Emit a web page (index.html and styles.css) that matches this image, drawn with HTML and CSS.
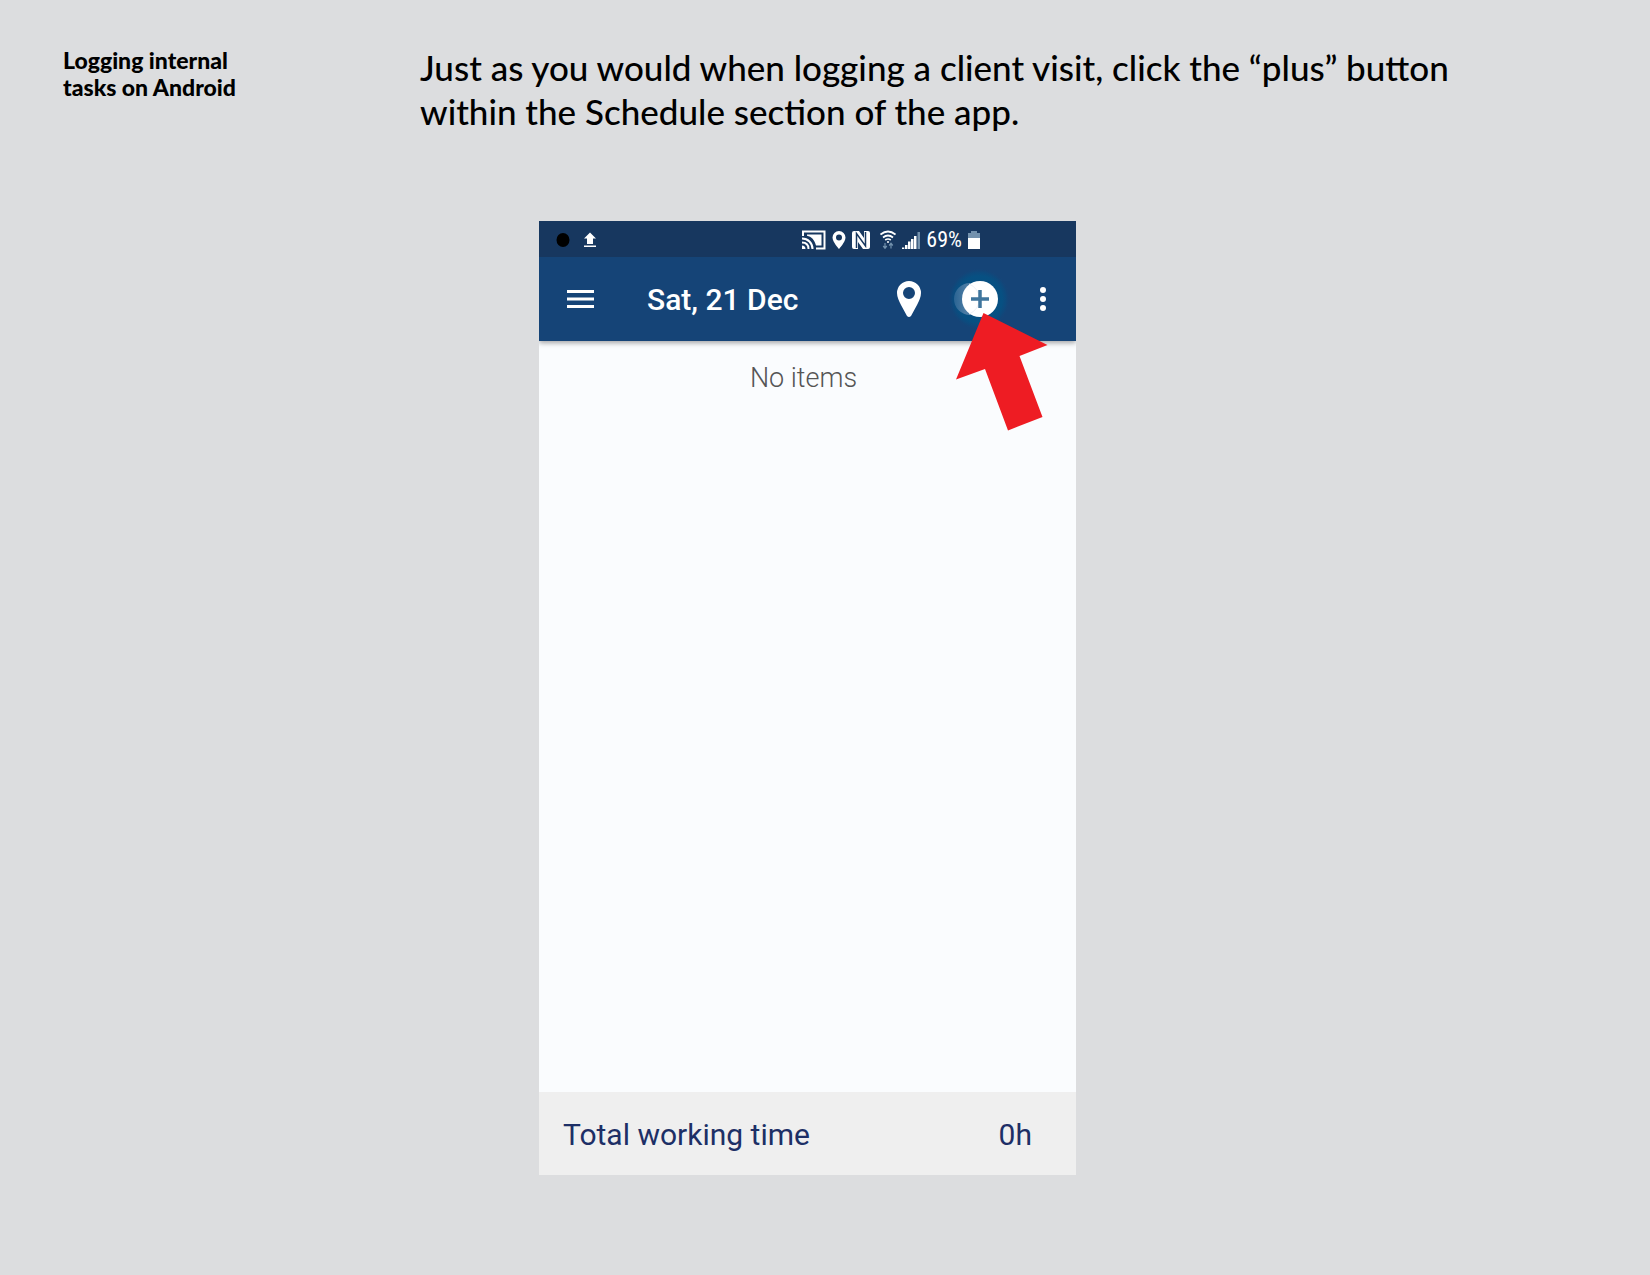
FILE: index.html
```
<!DOCTYPE html>
<html lang="en">
<head>
<meta charset="utf-8">
<meta name="viewport" content="width=device-width, initial-scale=1">
<title>Logging internal tasks on Android</title>
<link rel="stylesheet" href="styles.css">
</head>
<body>
<header class="intro">
  <h1 class="topic">Logging internal<br>tasks on Android</h1>
  <p class="lead">Just as you would when logging a client visit, click the “plus” button<br>within the Schedule section of the app.</p>
</header>
<main class="stage">
  <section class="phone" aria-label="Schedule screen">
    <div class="status">
      <div class="status-left">
        <svg width="14" height="16" viewBox="0 0 14 16"><ellipse cx="7" cy="8" rx="6.5" ry="7"/></svg>
        <svg width="12" height="16" viewBox="0 0 12 16" fill="#fff"><path d="M6 .5l6 6H9V12H3V6.500H0zM0 13.500h12v1.500H0z"/></svg>
      </div>
      <div class="status-right">
        <svg width="24" height="20" viewBox="0 0 24 20" fill="none" stroke="#fff" stroke-width="2"><path d="M1 6V1.500h21.500v17H14"/><path d="M5 4.500h14.500v11H14C12.500 10 9.500 6.500 5 5.800z" fill="#fff" stroke="none"/><path d="M0 8.500c6 0 10.500 4.500 10.500 10.500M0 12.500c4 0 6.500 2.500 6.500 6.500"/><path d="M0 15.500c2.200 0 3.500 1.300 3.500 3.500H0z" fill="#fff" stroke="none"/></svg>
        <svg width="14" height="20" viewBox="0 0 14 20" fill="#fff"><path fill-rule="evenodd" d="M7 1a6.500 6.500 0 0 0-6.500 6.500C.5 12 7 19 7 19s6.500-7 6.500-11.500A6.500 6.500 0 0 0 7 1zm0 3.500a3 3 0 1 1 0 6 3 3 0 0 1 0-6z"/></svg>
        <svg width="18" height="20" viewBox="0 0 18 20"><path d="M2 1h5l5 7V1h4q2 0 2 2v14q0 2-2 2h-5L6 12v7H2q-2 0-2-2V3q0-2 2-2z" fill="#fff"/><path d="M4.500 18V3.500L13.500 16V2" fill="none" stroke="#17375f" stroke-width="1.500"/></svg>
        <svg class="wifi" width="16" height="20" viewBox="0 0 16 20" fill="none" stroke="#fff" stroke-width="1.700"><path d="M.5 4.500q7.500-6 15 0M3 7.500q5-4 10 0M5.200 10q2.800-2 5.600 0"/><circle cx="8" cy="12" r="1" fill="#fff" stroke="none"/><path d="M5 13v5M3.200 16L5 18.200 6.800 16M11 18.500v-5M9.200 15.500l1.800-2.200 1.800 2.200" stroke="#7391ad" stroke-width="1.200"/></svg>
        <svg width="18" height="20" viewBox="0 0 18 20" fill="#fff"><path d="M0 19v-1.500h2.300V19zM3 19v-4h2.500v4zM6 19v-7.500h2.500V19zM9 19V9h2.500v10zM12 19V6h2.500v13z"/><path d="M15.500 19V2H18v17z" fill="#7391ad"/></svg>
        <span class="percent">69%</span>
        <svg width="12" height="20" viewBox="0 0 12 20"><path d="M0 3h3V1h6v2h3v5H0z" fill="#7391ad"/><path d="M0 8h12v11H0z" fill="#fff"/></svg>
      </div>
    </div>
    <div class="appbar">
      <button class="icon-btn" aria-label="Menu"><svg width="27" height="18" viewBox="0 0 27 18" fill="#fff"><path d="M0 0h27v3H0zM0 7.500h27v3H0zM0 15h27v3H0z"/></svg></button>
      <h2 class="date">Sat, 21 Dec</h2>
      <button class="icon-btn" aria-label="Location"><svg width="24" height="36" viewBox="0 0 24 36" fill="#fff"><path fill-rule="evenodd" d="M12 0A12 12 0 0 0 0 12c0 4 2 8 4 12l6 11q2 2 4 0l6-11c2-4 4-8 4-12A12 12 0 0 0 12 0zm0 6a6 6 0 1 1 0 12 6 6 0 0 1 0-12z"/></svg></button>
      <button class="icon-btn add" aria-label="Add">
        <svg width="64" height="64" viewBox="0 0 64 64">
          <defs>
            <radialGradient id="glow"><stop offset="0" stop-color="#045084"/><stop offset=".75" stop-color="#075082"/><stop offset=".87" stop-color="#0c4b7e" stop-opacity=".8"/><stop offset="1" stop-color="#154477" stop-opacity="0"/></radialGradient>
            <linearGradient id="trail"><stop offset="0" stop-color="#2a6493"/><stop offset=".35" stop-color="#4b7ba3"/></linearGradient>
          </defs>
          <circle cx="31" cy="32" r="31" fill="url(#glow)"/>
          <circle cx="22" cy="32" r="16" fill="url(#trail)"/>
          <circle cx="32" cy="32" r="18" fill="#fff"/>
          <path d="M21 17a16 16 0 0 1 0 30" fill="none" stroke="#eef1f6" stroke-width="1"/>
          <path d="M23 32h18M32 23v18" stroke="#3f759d" stroke-width="3.500"/>
        </svg>
        <svg class="arrow" width="92" height="118" viewBox="0 0 92 118"><path d="M27.500 0L91.500 32 63.500 43 86.500 104 52 117.500 29 56 0 66.500z" fill="#ee1c23"/></svg>
      </button>
      <button class="icon-btn" aria-label="More options"><svg width="6" height="24" viewBox="0 0 6 24" fill="#fff"><circle cx="3" cy="3" r="3"/><circle cx="3" cy="12" r="3"/><circle cx="3" cy="21" r="3"/></svg></button>
    </div>
    <p class="empty">No items</p>
    <div class="total"><span>Total working time</span><span>0h</span></div>
  </section>
</main>
</body>
</html>
```

FILE: styles.css
```
* { box-sizing: border-box; }
body {
  margin: 0;
  background: #dcdddf;
  color: #000;
  font-family: Roboto, sans-serif;
}
svg { display: block; flex: none; }
h1, h2, p { margin: 0; }

.intro {
  display: grid;
  grid-template-columns: 357px 1fr;
  padding: 45px 63px 0;
  font-family: Futura, Lato, sans-serif;
}
.topic { padding-top: 2px; font-size: 23px; line-height: 27px; font-weight: 900; }
.lead { font-size: 35px; line-height: 44px; font-weight: 500; }

.stage {
  display: flex;
  justify-content: center;
  padding: 88px 35px 100px 0;
}
.phone {
  display: flex;
  flex-direction: column;
  width: 100%;
  max-width: 537px;
  min-height: 954px;
  background: #fafcfe;
}

.status {
  display: flex;
  align-items: center;
  justify-content: space-between;
  height: 36px;
  padding: 1px 96px 0 17px;
  background: #17375f;
  color: #fff;
}
.status-left, .status-right { display: flex; align-items: center; }
.status-left { gap: 14px; }
.status-right { gap: 6px; }
.wifi { margin-left: 4px; }
.percent { font-family: "Roboto Condensed", Roboto, sans-serif; font-size: 22px; line-height: 24px; }

.appbar {
  display: flex;
  align-items: center;
  height: 84px;
  padding: 0 30px 0 28px;
  background: #154477;
  color: #fff;
  box-shadow: 0 2px 5px rgba(0, 0, 0, 0.35);
  clip-path: inset(0 0 -120px 0);
}
.icon-btn { padding: 0; border: 0; background: none; }
.date { flex: 1; padding: 2px 0 0 53px; font-size: 30px; line-height: 36px; font-weight: 500; }
.add { position: relative; margin: 0 28px 0 27px; }
.arrow { position: absolute; left: 8px; top: 46px; }

.empty {
  flex: 1;
  padding: 20px 8px 0 0;
  color: #555;
  font-size: 27px;
  line-height: 34px;
  font-weight: 300;
  text-align: center;
}
.total {
  display: flex;
  align-items: center;
  justify-content: space-between;
  height: 83px;
  padding: 2px 44px 0 24px;
  background: #efefef;
  color: #1d2f66;
  font-size: 30px;
}
```
